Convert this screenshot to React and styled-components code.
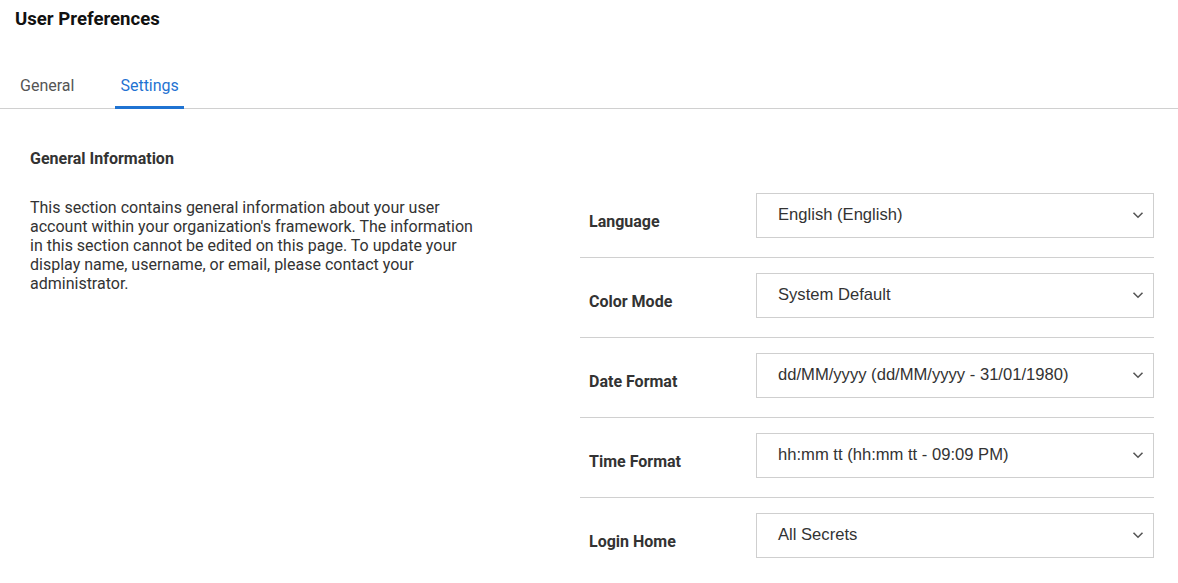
import React from "react";
import styled, { createGlobalStyle } from "styled-components";

const GlobalStyle = createGlobalStyle`
  body {
    margin: 0;
    background: #fff;
    font-family: Roboto, "Liberation Sans", Arial, sans-serif;
    color: #333;
  }
`;

const Page = styled.div`
  width: 1178px;
  min-height: 583px;
  overflow: hidden;
`;

const Title = styled.h1`
  margin: 0;
  padding: 7px 15px 0;
  font-size: 18.6px;
  line-height: 24px;
  font-weight: 700;
  color: #111;
`;

const TabBar = styled.div`
  display: flex;
  gap: 36px;
  margin-top: 39px;
  padding-left: 15px;
  border-bottom: 1px solid #d0d0d0;
`;

const Tab = styled.div`
  padding: 1px 5px 0;
  height: 39px;
  box-sizing: border-box;
  line-height: 30px;
  font-size: 16px;
  color: ${(p) => (p.$active ? "#1f73d2" : "#555")};
  border-bottom: 3px solid ${(p) => (p.$active ? "#1f73d2" : "transparent")};
  margin-bottom: -1px;
`;

const Content = styled.div`
  display: flex;
  padding: 38px 24px 0 30px;
`;

const InfoColumn = styled.div`
  width: 460px;
  flex-shrink: 0;
`;

const SectionTitle = styled.h2`
  margin: 0;
  font-size: 16px;
  line-height: 24px;
  font-weight: 700;
  color: #333;
`;

const Description = styled.p`
  margin: 27px 0 0;
  max-width: 452px;
  font-size: 16px;
  line-height: 19px;
  color: #333;
`;

const Fields = styled.div`
  margin-left: 90px;
  margin-top: 31px;
  flex: 1;
`;

const Row = styled.div`
  display: flex;
  align-items: center;
  padding: 15px 0 19px;
  border-bottom: 1px solid ${(p) => (p.$last ? "transparent" : "#d0d0d0")};
`;

const Label = styled.div`
  width: 167px;
  padding-left: 9px;
  padding-top: 12px;
  font-size: 16px;
  font-weight: 700;
  color: #333;
`;

const Select = styled.div`
  flex: 1;
  height: 45px;
  box-sizing: border-box;
  border: 1px solid #cfcfcf;
  display: flex;
  align-items: center;
  justify-content: space-between;
  padding: 0 9px 2px 21px;
  font-family: "Liberation Sans", Arial, sans-serif;
  font-size: 16.6px;
  color: #333;
`;

const Chevron = () => (
  <svg width="12" height="8" viewBox="0 0 12 8" fill="none">
    <path d="M1.5 1.8L6 6.2L10.5 1.8" stroke="#555" strokeWidth="1.6" />
  </svg>
);

const fields = [
  ["Language", "English (English)"],
  ["Color Mode", "System Default"],
  ["Date Format", "dd/MM/yyyy (dd/MM/yyyy - 31/01/1980)"],
  ["Time Format", "hh:mm tt (hh:mm tt - 09:09 PM)"],
  ["Login Home", "All Secrets"],
];

export default function App() {
  return (
    <Page>
      <GlobalStyle />
      <Title>User Preferences</Title>
      <TabBar>
        <Tab>General</Tab>
        <Tab $active>Settings</Tab>
      </TabBar>
      <Content>
        <InfoColumn>
          <SectionTitle>General Information</SectionTitle>
          <Description>
            This section contains general information about your user account
            within your organization's framework. The information in this
            section cannot be edited on this page. To update your display name,
            username, or email, please contact your administrator.
          </Description>
        </InfoColumn>
        <Fields>
          {fields.map(([label, value], i) => (
            <Row key={label} $last={i === fields.length - 1}>
              <Label>{label}</Label>
              <Select>
                <span>{value}</span>
                <Chevron />
              </Select>
            </Row>
          ))}
        </Fields>
      </Content>
    </Page>
  );
}
